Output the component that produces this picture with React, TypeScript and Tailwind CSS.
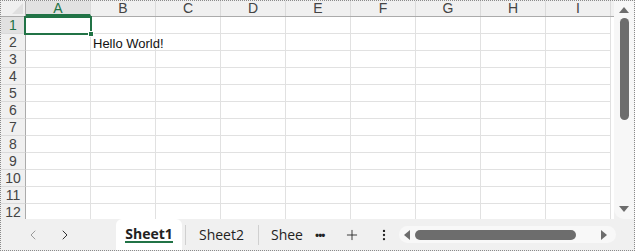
import { Plus, ChevronLeft, ChevronRight, EllipsisVertical } from 'lucide-react';

const cols = ['A', 'B', 'C', 'D', 'E', 'F', 'G', 'H', 'I'];
const rows = [1, 2, 3, 4, 5, 6, 7, 8, 9, 10, 11, 12];

function HeaderRow() {
    return (
        <div className="flex h-[16px] bg-[#f0f0f0] border-b border-[#ababab]">
            <div className="relative w-[25px] shrink-0 border-r border-[#ababab]">
                <div className="absolute right-[2px] bottom-[2px] w-0 h-0 border-l-[11px] border-l-transparent border-b-[11px] border-b-[#dfdfdf]" />
            </div>
            {cols.map((c, i) => (
                <div
                    key={c}
                    className={`w-[65px] shrink-0 border-r border-[#dadada] text-center text-[14px] leading-[15px] ${
                        i === 0 ? 'bg-[#e1e1e1] text-[#217346] border-b-2 border-b-[#217346]' : 'text-[#444]'
                    }`}
                >
                    {c}
                </div>
            ))}
        </div>
    );
}

function Row({ n }: { n: number }) {
    const sel = n === 1;
    return (
        <div className="flex h-[17px]">
            <div
                className={`w-[25px] shrink-0 border-r border-[#ababab] border-b border-b-[#dadada] text-center text-[14px] leading-[16px] ${
                    sel ? 'bg-[#e1e1e1] text-[#217346]' : 'bg-[#f0f0f0] text-[#444]'
                }`}
            >
                {n}
            </div>
            {cols.map((c) => (
                <div key={c} className="w-[65px] shrink-0 border-r border-b border-[#e1e1e1] bg-white" />
            ))}
        </div>
    );
}

function VScroll() {
    return (
        <div className="w-[20px] shrink-0 bg-[#f0f0f0]">
            <div className="h-full bg-[#f7f7f7] rounded-bl-[10px] flex flex-col items-center pt-[4px] pb-[4px]">
                <div className="w-0 h-0 border-l-[5px] border-l-transparent border-r-[5px] border-r-transparent border-b-[6px] border-b-[#6d6d6d] mt-[2px]" />
                <div className="w-[9px] h-[102px] bg-[#6d6d6d] rounded-[5px] mt-[5px] ml-[1px]" />
                <div className="flex-1" />
                <div className="w-0 h-0 border-l-[5px] border-l-transparent border-r-[5px] border-r-transparent border-t-[6px] border-t-[#6d6d6d] mb-[3px]" />
            </div>
        </div>
    );
}

function TabBar() {
    return (
        <div className="flex items-stretch h-[31px] bg-[#f0f0f0] font-['Open_Sans',sans-serif] text-[#222]">
            <div className="flex items-center w-[115px] pl-[24px] gap-[16px] text-[#9a9a9a]">
                <ChevronLeft size={16} strokeWidth={1.5} />
                <ChevronRight size={16} strokeWidth={1.5} className="text-[#333]" />
            </div>
            <div className="relative flex flex-col items-center justify-center w-[66px] bg-white rounded-t-[6px]">
                <span className="text-[14px] font-bold leading-[18px] mt-[-2px]">Sheet1</span>
                <div className="absolute bottom-[7px] left-[9px] right-[9px] h-[2px] bg-[#217346]" />
            </div>
            <div className="flex items-center">
                <div className="w-px h-[20px] bg-[#d0d0d0] ml-[3px]" />
                <span className="text-[14px] ml-[13px] w-[46px]">Sheet2</span>
                <div className="w-px h-[20px] bg-[#d0d0d0] ml-[13px]" />
                <span className="text-[14px] ml-[12px] whitespace-nowrap">Shee</span>
                <span className="ml-[12px] text-[11px] tracking-[-1px] font-bold leading-none">•••</span>
                <Plus size={16} strokeWidth={1.3} className="ml-[20px]" />
                <EllipsisVertical size={14} strokeWidth={2} className="ml-[17px]" />
            </div>
            <div className="flex items-center ml-[8px]">
                <div className="flex items-center w-[217px] h-[17px] bg-[#f8f8f8] rounded-[9px] px-[5px]">
                    <div className="w-0 h-0 border-t-[5px] border-t-transparent border-b-[5px] border-b-transparent border-r-[6px] border-r-[#6d6d6d]" />
                    <div className="w-[161px] h-[10px] bg-[#6d6d6d] rounded-[5px] ml-[5px]" />
                    <div className="flex-1" />
                    <div className="w-0 h-0 border-t-[5px] border-t-transparent border-b-[5px] border-b-transparent border-l-[6px] border-l-[#6d6d6d] mr-[4px]" />
                </div>
            </div>
        </div>
    );
}

export default function App() {
    return (
        <div className="w-[635px] h-[251px] border border-dotted border-[#8a8a8a] bg-[#f0f0f0] overflow-hidden font-['Liberation_Sans',Arial,sans-serif]">
            <div className="flex h-[218px]">
                <div className="relative flex-1 overflow-hidden bg-white">
                    <HeaderRow />
                    {rows.map((n) => (
                        <Row key={n} n={n} />
                    ))}
                    <span className="absolute left-[92px] top-[35px] whitespace-nowrap text-[13px] leading-[15px] text-[#111]">
                        Hello World!
                    </span>
                    <div className="absolute left-[23px] top-[15px] w-[68px] h-[19px] border-2 border-[#217346]" />
                    <div className="absolute left-[87px] top-[30px] w-[6px] h-[6px] bg-[#217346] border border-white" />
                </div>
                <VScroll />
            </div>
            <TabBar />
        </div>
    );
}
